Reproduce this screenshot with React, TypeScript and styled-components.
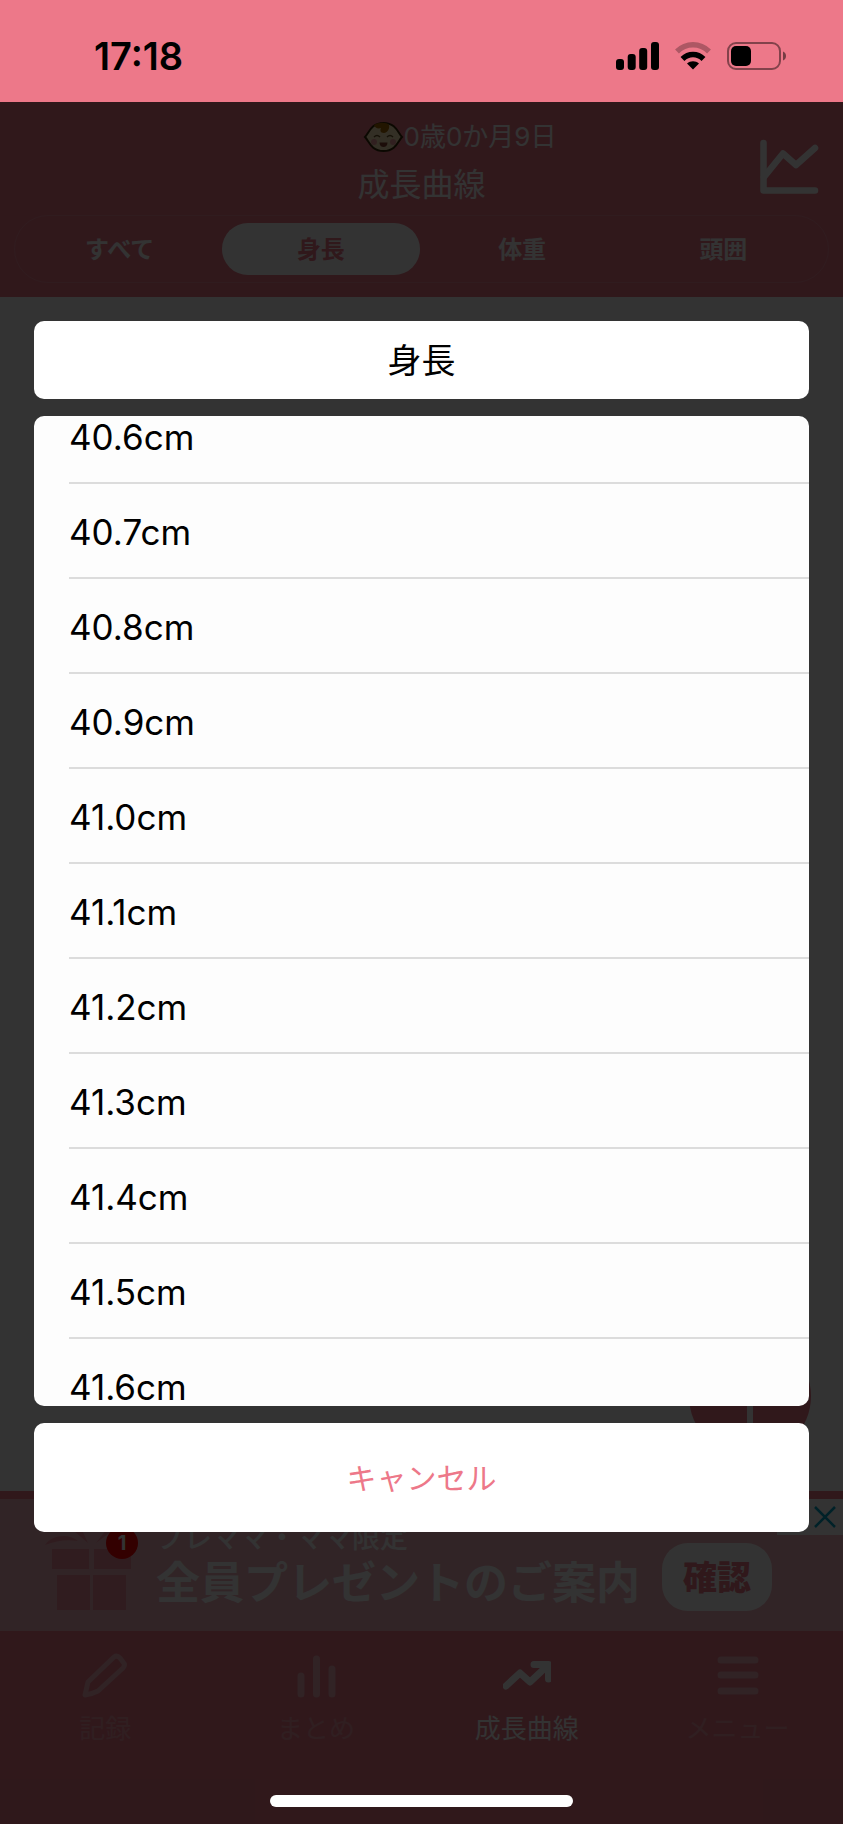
import React, { useLayoutEffect, useRef } from "react";
import styled, { createGlobalStyle } from "styled-components";

const PINK = "#ed7889";

const GlobalStyle = createGlobalStyle`
  *, *::before, *::after { box-sizing: border-box; }
  body {
    margin: 0;
    font-family: Inter, "Noto Sans CJK JP", sans-serif;
    background: #333;
  }
  button {
    font-family: inherit;
    border: 0;
    padding: 0;
    margin: 0;
    background: none;
    color: inherit;
    cursor: pointer;
  }
  svg { display: block; }
`;

const Phone = styled.div`
  display: flex;
  flex-direction: column;
  min-height: 100vh;
`;

const StatusBar = styled.div`
  flex: none;
  display: flex;
  align-items: center;
  justify-content: space-between;
  height: 102px;
  padding: 10px 56px 0 94px;
  background: ${PINK};
  color: #000;
`;

const Clock = styled.time`
  font-size: 38px;
  font-weight: 600;
  line-height: 44px;
`;

const StatusIcons = styled.div`
  display: flex;
  align-items: center;
  gap: 16px;
`;

const Stage = styled.div`
  flex: 1;
  position: relative;
  display: flex;
  flex-direction: column;
`;

const Screen = styled.div`
  flex: 1;
  display: flex;
  flex-direction: column;
  background: #fff;
`;

const Header = styled.header`
  padding: 17px 14px 14px;
  background: ${PINK};
  color: #fff;
`;

const HeaderTop = styled.div`
  display: grid;
  grid-template-columns: 1fr auto 1fr;
  align-items: center;
`;

const Titles = styled.div`
  grid-column: 2;
  display: flex;
  flex-direction: column;
  align-items: center;
`;

const Age = styled.div`
  display: flex;
  align-items: center;
  padding-left: 76px;
  font-size: 26px;
  line-height: 36px;
`;

const Title = styled.h1`
  margin: 0;
  font-size: 32px;
  font-weight: 400;
  line-height: 60px;
`;

const ChartButton = styled.button`
  justify-self: end;
  margin-right: 10px;
`;

const Tabs = styled.div`
  display: flex;
  gap: 4px;
  height: 68px;
  padding: 7px 6px;
  border: 1px solid rgba(255, 255, 255, 0.15);
  border-radius: 34px;
`;

const Tab = styled.button<{ $active?: boolean }>`
  flex: 1;
  padding-bottom: 4px;
  border-radius: 26px;
  background: ${(p) => (p.$active ? "#fff" : "transparent")};
  color: ${(p) => (p.$active ? PINK : "#fff")};
  font-size: 24px;
  font-weight: 700;
`;

const Chart = styled.main`
  flex: 1;
  display: flex;
  align-items: flex-end;
  justify-content: flex-end;
  padding: 34px 32px;
`;

const AddButton = styled.button`
  display: grid;
  place-items: center;
  width: 122px;
  height: 122px;
  border-radius: 50%;
  background: ${PINK};
`;

const Banner = styled.aside`
  position: relative;
  display: flex;
  align-items: flex-end;
  height: 140px;
  padding: 0 44px 20px;
  border-top: 8px solid ${PINK};
  background: #f5b4be;
  color: #fff;
`;

const Gift = styled.div`
  position: relative;
  margin-right: 16px;
`;

const Badge = styled.span`
  position: absolute;
  top: 0;
  right: 2px;
  width: 32px;
  border-radius: 50%;
  background: #f00;
  font-size: 20px;
  font-weight: 700;
  line-height: 32px;
  text-align: center;
`;

const BannerText = styled.div`
  margin-right: 22px;
  white-space: nowrap;
`;

const BannerSmall = styled.div`
  font-size: 28px;
  font-weight: 500;
  line-height: 34px;
`;

const BannerLarge = styled.div`
  font-size: 44px;
  font-weight: 700;
  line-height: 56px;
`;

const ConfirmButton = styled.button`
  flex: none;
  width: 110px;
  height: 68px;
  padding-bottom: 4px;
  border-radius: 26px;
  background: #fff;
  color: ${PINK};
  font-size: 34px;
  font-weight: 900;
`;

const CloseAd = styled.button`
  position: absolute;
  top: 0;
  right: 0;
  display: flex;
  align-items: center;
  justify-content: flex-end;
  width: 66px;
  height: 36px;
  padding-right: 6px;
  background: #fff;
`;

const Nav = styled.nav`
  display: grid;
  grid-template-columns: repeat(4, 1fr);
  height: 193px;
  padding-top: 20px;
  background: ${PINK};
`;

const NavItem = styled.a<{ $active?: boolean }>`
  display: flex;
  flex-direction: column;
  align-items: center;
  gap: 12px;
  color: #fff;
  font-size: 26px;
  line-height: 36px;
  text-decoration: none;

  svg { opacity: ${(p) => (p.$active ? 1 : 0.4)}; }
  span { opacity: ${(p) => (p.$active ? 1 : 0.25)}; }
`;

const Overlay = styled.div`
  position: absolute;
  inset: 0;
  display: flex;
  flex-direction: column;
  gap: 17px;
  padding: 219px 34px 292px;
  background: rgba(0, 0, 0, 0.8);
`;

const DialogTitle = styled.h2`
  flex: none;
  margin: 0;
  padding-top: 2px;
  border-radius: 10px;
  background: #fff;
  color: #000;
  font-size: 34px;
  font-weight: 400;
  line-height: 76px;
  text-align: center;
`;

const Options = styled.ul`
  flex: 1;
  min-height: 0;
  margin: 0;
  padding: 0;
  overflow-y: auto;
  scrollbar-width: none;
  border-radius: 10px;
  background: #fdfdfd;
  list-style: none;
`;

const Option = styled.li`
  margin-left: 35px;
  border-bottom: 2px solid #dcdcdc;
`;

const OptionButton = styled.button`
  display: block;
  width: 100%;
  height: 93px;
  padding-top: 2px;
  color: #000;
  font-size: 35px;
  line-height: 36px;
  text-align: left;
`;

const CancelButton = styled.button`
  flex: none;
  height: 109px;
  padding-bottom: 4px;
  border-radius: 10px;
  background: #fff;
  color: ${PINK};
  font-size: 30px;
`;

const HomeIndicator = styled.div`
  position: absolute;
  bottom: 17px;
  left: 32%;
  right: 32%;
  height: 12px;
  border-radius: 6px;
  background: #fff;
`;

const SignalIcon = () => (
  <svg width="43" height="28" viewBox="0 0 43 28">
    <rect x="0" y="17" width="8" height="11" rx="3" />
    <rect x="11.7" y="12" width="8" height="16" rx="3" />
    <rect x="23.2" y="6" width="8" height="22" rx="3" />
    <rect x="35" y="0" width="8" height="28" rx="3" />
  </svg>
);

const WifiIcon = () => (
  <svg width="36" height="28" viewBox="0 0 36 28" fill="none" stroke="#000" strokeWidth="5.500">
    <path d="M2 9.5C11 .5 25 .5 34 9.5" opacity=".27" />
    <path d="M7.5 17C13.5 11 22.5 11 28.5 17" />
    <path d="M12 21.500C15.5 18.500 20.5 18.500 24 21.500L18 27.5z" fill="#000" stroke="none" />
  </svg>
);

const BatteryIcon = () => (
  <svg width="60" height="28" viewBox="0 0 60 28">
    <rect x="1" y="1" width="52" height="26" rx="8" fill="none" stroke="#000" strokeWidth="2" opacity=".45" />
    <rect x="4" y="4" width="20" height="20" rx="5" />
    <path d="M56 9.500C60 11 60 17 56 18.500z" opacity=".5" />
  </svg>
);

const BabyFace = () => (
  <svg width="41" height="32" viewBox="0 0 41 32">
    <path d="M2 16C6 12 8 2 20.500 2S35 12 39 16C35 20 33 30 20.500 30S6 20 2 16z" fill="#ffe9b8" stroke="#3a2a08" strokeWidth="2" />
    <path d="M11 4C15 1 24 1 26 4C27 8 24 12 21 12C17 12 17 9 18 7C15 8 12 7 11 4z" fill="#a86a00" />
    <path d="M11 16q3-3 6 0M24 16q3-3 6 0" fill="none" stroke="#6b5526" strokeWidth="1.500" />
    <circle cx="11" cy="21" r="3" fill="#f5a0a0" />
    <circle cx="30" cy="21" r="3" fill="#f5a0a0" />
    <path d="M16.500 21.500h8c0 6-8 6-8 0z" fill="#8a4030" />
  </svg>
);

const ChartIcon = () => (
  <svg width="60" height="56" viewBox="0 0 60 56" fill="none" stroke="#fff" strokeWidth="6.500" strokeLinecap="round" strokeLinejoin="round">
    <path d="M4.500 4V51.500H56" />
    <path d="M5 38L24 14.500L37 26L56 9" />
  </svg>
);

const GiftIcon = () => (
  <svg width="96" height="84" viewBox="0 0 96 84" fill="#f08c9b">
    <path d="M8 22h37v20H8zM50 22h37v20H50zM13 48h33v35H13zM49 48h33v35H49z" />
    <path d="M1 18C8 8 24 6 34 14C22 12 12 14 1 18zM30 4L44 16L38 3zM62 3L52 16L68 4z" />
  </svg>
);

const navIcon = { width: 48, height: 48, viewBox: "0 0 48 48", fill: "none", stroke: "#fff", strokeWidth: 7, strokeLinecap: "round", strokeLinejoin: "round" } as const;

const PencilIcon = () => (
  <svg {...navIcon} strokeWidth={5}>
    <path d="M4 44L7 31L33 6Q36 4 39 7L42 11Q45 14 42 17L17 40Q11 43 4 44z" />
  </svg>
);

const BarsIcon = () => (
  <svg {...navIcon}>
    <path d="M9 25V43M24.500 8V43M40 18V43" />
  </svg>
);

const TrendIcon = () => (
  <svg {...navIcon}>
    <path d="M3 35L17 22L27 31L43 16M31 13.500H45.500V28" />
  </svg>
);

const MenuIcon = () => (
  <svg {...navIcon}>
    <path d="M7 9H41M7 24H41M7 40H41" />
  </svg>
);

const tabs = ["すべて", "身長", "体重", "頭囲"];

const navItems = [
  { label: "記録", Icon: PencilIcon },
  { label: "まとめ", Icon: BarsIcon },
  { label: "成長曲線", Icon: TrendIcon, active: true },
  { label: "メニュー", Icon: MenuIcon },
];

const heights = Array.from({ length: 11 }, (_, i) => (40.6 + i / 10).toFixed(1) + "cm");

export default function App() {
  const list = useRef<HTMLUListElement>(null);

  useLayoutEffect(() => {
    if (list.current) list.current.scrollTop = 27;
  }, []);

  return (
    <Phone>
      <GlobalStyle />
      <StatusBar>
        <Clock>17:18</Clock>
        <StatusIcons>
          <SignalIcon />
          <WifiIcon />
          <BatteryIcon />
        </StatusIcons>
      </StatusBar>
      <Stage>
        <Screen>
          <Header>
            <HeaderTop>
              <Titles>
                <Age>
                  <BabyFace />
                  0歳0か月9日
                </Age>
                <Title>成長曲線</Title>
              </Titles>
              <ChartButton aria-label="グラフ">
                <ChartIcon />
              </ChartButton>
            </HeaderTop>
            <Tabs>
              {tabs.map((t) => (
                <Tab key={t} $active={t === "身長"}>{t}</Tab>
              ))}
            </Tabs>
          </Header>
          <Chart>
            <AddButton aria-label="追加">
              <svg width="60" height="60" viewBox="0 0 60 60" stroke="#fff" strokeWidth="6">
                <path d="M30 0V60M0 30H60" />
              </svg>
            </AddButton>
          </Chart>
          <Banner>
            <Gift>
              <GiftIcon />
              <Badge>1</Badge>
            </Gift>
            <BannerText>
              <BannerSmall>プレママ・ママ限定</BannerSmall>
              <BannerLarge>全員プレゼントのご案内</BannerLarge>
            </BannerText>
            <ConfirmButton>確認</ConfirmButton>
            <CloseAd aria-label="広告を閉じる">
              <svg width="24" height="24" viewBox="0 0 24 24" stroke="#00a5c8" strokeWidth="2.500">
                <path d="M2 2L22 22M22 2L2 22" />
              </svg>
            </CloseAd>
          </Banner>
          <Nav>
            {navItems.map(({ label, Icon, active }) => (
              <NavItem key={label} href="#" $active={active}>
                <Icon />
                <span>{label}</span>
              </NavItem>
            ))}
          </Nav>
        </Screen>
        <Overlay role="dialog" aria-modal="true" aria-labelledby="dialog-title">
          <DialogTitle id="dialog-title">身長</DialogTitle>
          <Options ref={list}>
            {heights.map((h) => (
              <Option key={h}>
                <OptionButton>{h}</OptionButton>
              </Option>
            ))}
          </Options>
          <CancelButton>キャンセル</CancelButton>
          <HomeIndicator />
        </Overlay>
      </Stage>
    </Phone>
  );
}
